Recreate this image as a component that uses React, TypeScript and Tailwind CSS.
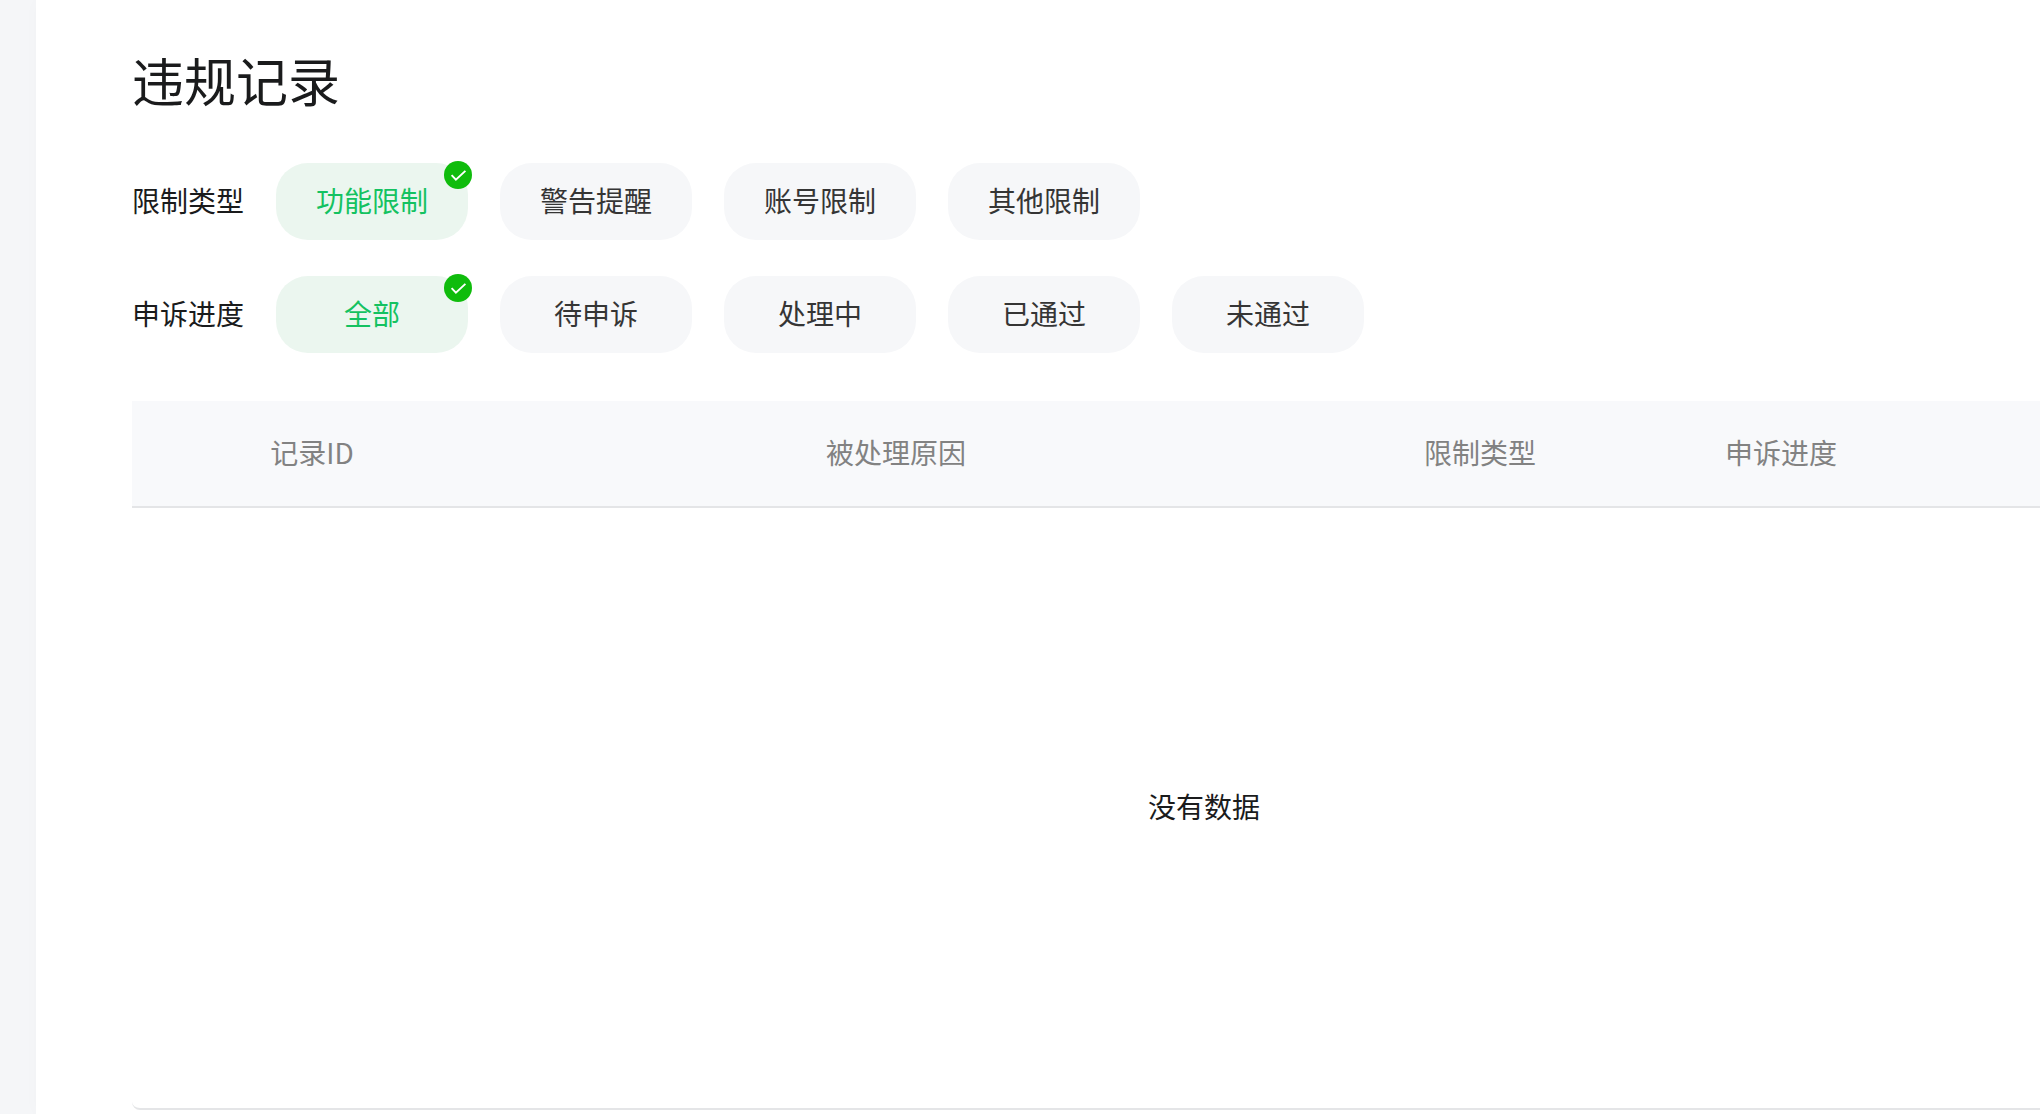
import { useState } from "react";

const filters = [
  { label: "限制类型", options: ["功能限制", "警告提醒", "账号限制", "其他限制"] },
  { label: "申诉进度", options: ["全部", "待申诉", "处理中", "已通过", "未通过"] },
];

function CheckBadge() {
  return (
    <svg className="absolute -top-0.5 -right-1 size-7" viewBox="0 0 28 28" fill="none" aria-hidden="true">
      <circle cx="14" cy="14" r="14" fill="#0fbc0c" />
      <path d="M7.6 14.2l4.3 4.5 9.5-8.8" stroke="#fff" strokeWidth="1.9" />
    </svg>
  );
}

function FilterRow({ label, options }: { label: string; options: string[] }) {
  const [selected, setSelected] = useState(options[0]);

  return (
    <div role="group" aria-label={label} className="flex items-center gap-8">
      <span className="shrink-0 pb-1">{label}</span>
      {options.map((option) => (
        <button
          key={option}
          type="button"
          aria-pressed={option === selected}
          onClick={() => setSelected(option)}
          className={
            option === selected
              ? "relative h-[77px] w-48 shrink-0 cursor-pointer rounded-[32px] bg-[#ebf6ef] pb-1 text-[#14c261]"
              : "relative h-[77px] w-48 shrink-0 cursor-pointer rounded-[32px] bg-[#f6f7f9] pb-1 text-[#353535]"
          }
        >
          {option}
          {option === selected && <CheckBadge />}
        </button>
      ))}
    </div>
  );
}

function RecordTable() {
  return (
    <div className="mt-12 overflow-hidden">
      <table className="w-full min-w-[2144px] table-fixed border-separate border-spacing-0 text-center">
        <thead>
          <tr className="h-[107px] bg-[#f8f9fb] text-[#828282]">
            <th className="w-[360px] border-b-2 border-[#e4e5e7] pb-1 font-normal">记录ID</th>
            <th className="w-[808px] border-b-2 border-[#e4e5e7] pb-1 font-normal">被处理原因</th>
            <th className="w-[360px] border-b-2 border-[#e4e5e7] pb-1 font-normal">限制类型</th>
            <th className="w-[242px] border-b-2 border-[#e4e5e7] pb-1 font-normal">申诉进度</th>
            <th className="border-b-2 border-[#e4e5e7]" />
          </tr>
        </thead>
        <tbody>
          <tr>
            <td colSpan={5} className="h-[602px] rounded-b-lg border-b-2 border-[#e4e5e7] pb-1">
              没有数据
            </td>
          </tr>
        </tbody>
      </table>
    </div>
  );
}

export default function App() {
  return (
    <div className="min-h-screen overflow-hidden bg-[#f5f6f8] pl-9 font-['Noto_Sans_CJK_SC',sans-serif] text-[28px] leading-10 text-[#1a1b1c]">
      <main className="min-h-screen bg-white pt-10 pl-24 shadow-[0_0_16px_rgba(0,0,0,0.02)]">
        <h1 className="mb-11 text-[52px] leading-[79px]">违规记录</h1>
        <div className="flex flex-col gap-9">
          {filters.map((filter) => (
            <FilterRow key={filter.label} label={filter.label} options={filter.options} />
          ))}
        </div>
        <RecordTable />
      </main>
    </div>
  );
}
